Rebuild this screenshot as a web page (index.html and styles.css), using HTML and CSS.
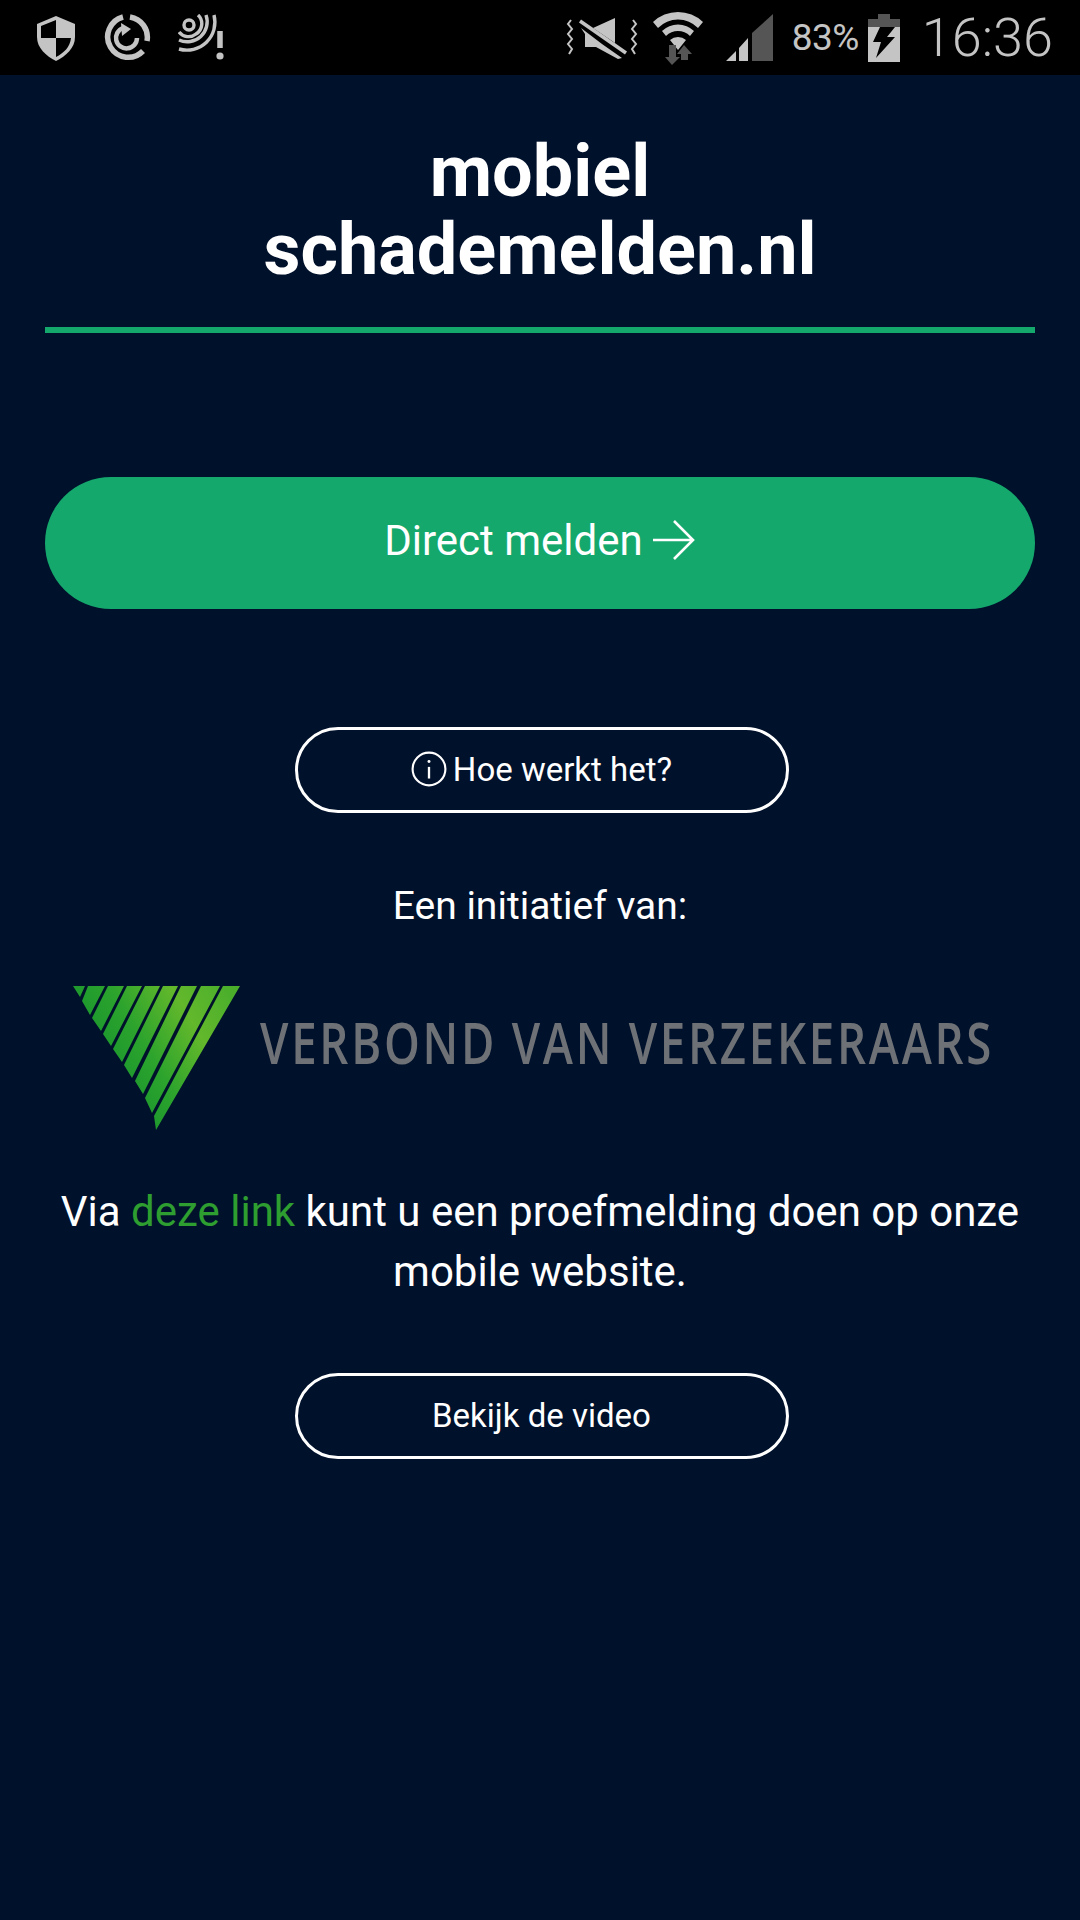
FILE: index.html
```html
<!DOCTYPE html>
<html lang="nl">
<head>
<meta charset="utf-8">
<title>mobiel schademelden.nl</title>
<link rel="stylesheet" href="styles.css">
</head>
<body>
<div class="statusbar">
  <div class="status-left">
    <svg class="ic-shield" width="40" height="46" viewBox="0 0 40 46"><path d="M20 1 L39 9 V22 C39 33 30 41 20 46 C10 41 1 33 1 22 V9Z" fill="#c4c4c4"/><path d="M20 5 V23 H5 V11Z M20 23 H35 C34 32 28 38 20 42Z" fill="#000"/></svg>
    <svg class="ic-sync" width="48" height="48" viewBox="0 0 48 48" fill="none" stroke="#c4c4c4"><path d="M20 3 A20.5 20.5 0 1 0 40 37" stroke-width="5.5"/><path d="M27 3 A20.5 20.5 0 0 1 44 27" stroke-width="5.5"/><path d="M34 24 A10.5 10.5 0 1 1 20 14" stroke-width="4.5"/><path d="M18 9 L28 15 L19 22Z" fill="#c4c4c4" stroke="none"/></svg>
    <svg class="ic-nfc" width="48" height="48" viewBox="0 0 48 48" fill="none" stroke="#c4c4c4" stroke-width="3.4"><circle cx="11" cy="11" r="5"/><path d="M1 18 A12 12 0 0 0 18 20 A12 12 0 0 0 20 1"/><path d="M1 26 A20 20 0 0 0 28 1"/><path d="M1 35 A28 28 0 0 0 36 1"/><path d="M42 17 V34" stroke-width="5.5"/><circle cx="42" cy="42" r="3.6" fill="#c4c4c4" stroke="none"/></svg>
  </div>
  <div class="status-right">
    <svg class="ic-mute" width="72" height="46" viewBox="0 0 72 46" fill="none"><path d="M5 5 L2 9 L6 14 L2 19 L6 24 L2 29 L6 34 L3 39" stroke="#c4c4c4" stroke-width="2"/><path d="M67 5 L70 9 L66 14 L70 19 L66 24 L70 29 L66 34 L69 39" stroke="#c4c4c4" stroke-width="2"/><path d="M15 13 L36 29 L56 43 L52 44 L30 32 H19 V19Z M27 13 L49 3 V28Z" fill="#c4c4c4"/><path d="M14 6 L60 38" stroke="#c4c4c4" stroke-width="3.6"/></svg>
    <svg class="ic-wifi" width="52" height="54" viewBox="0 0 52 54"><path d="M1 11 A36 36 0 0 1 51 11 L46 17 A28 28 0 0 0 6 17Z M10 20 A23 23 0 0 1 42 20 L38 25 A17 17 0 0 0 14 25Z M18 29 A12 12 0 0 1 34 29 L26 39Z" fill="#c4c4c4"/><path d="M17 34 H24 V46 H28 L20 54 L13 46 H17Z" fill="#555"/><path d="M32 34 L40 43 H36 V49 H29 V43 H25Z" fill="#555"/></svg>
    <svg class="ic-signal" width="48" height="50" viewBox="0 0 48 50"><path d="M0 48 L10 38 V48Z M13 35 L22 25 V48 H13Z" fill="#c4c4c4"/><path d="M26 20 L47 1 V48 H26Z" fill="#555"/></svg>
    <span class="pct">83%</span>
    <svg class="ic-batt" width="34" height="48" viewBox="0 0 32 48"><path d="M10 0 H22 V5 H32 V13 H0 V5 H10Z" fill="#555"/><path d="M0 13 H32 V48 H0Z" fill="#c4c4c4"/><path d="M12 13 H27 L19 23 H27 L8 44 L13 28 H5Z" fill="#000"/></svg>
    <span class="clock">16:36</span>
  </div>
</div>
<main class="page">
  <h1 class="title">mobiel<br>schademelden.nl</h1>
  <hr class="rule">
  <a class="btn-primary"><span>Direct melden</span><svg width="44" height="42" viewBox="0 0 44 42" fill="none" stroke="#fff" stroke-width="2.6"><path d="M1 21 H41 M22 2 L41 21 L22 40"/></svg></a>
  <a class="btn-outline btn-first"><svg width="36" height="36" viewBox="0 0 34 34" fill="none" stroke="#fff" stroke-width="2"><circle cx="17" cy="17" r="15.5"/><path d="M17 15 V26" stroke-width="2.2"/><circle cx="17" cy="10" r="1.4" fill="#fff" stroke="none"/></svg><span>Hoe werkt het?</span></a>
  <p class="initiative">Een initiatief van:</p>
  <div class="logo">
    <svg width="168" height="144" viewBox="0 0 168 144">
      <defs><linearGradient id="g" x1="0" y1="0.7" x2="1" y2="0.2"><stop offset="0" stop-color="#0b8a2e"/><stop offset="0.45" stop-color="#2ba32d"/><stop offset="0.75" stop-color="#63b82b"/><stop offset="1" stop-color="#4caf2c"/></linearGradient></defs>
      <path fill="url(#g)" d="M0 0 H12 L7 11Z M15 0 H32 L17 29 L9 15Z M35 0 H51 L28 45 L19 32Z M54 0 H69 L38 60 L30 48Z M72 0 H87 L49 76 L40 63Z M90 0 H105 L59 92 L51 79Z M108 0 H124 L70 108 L62 95Z M128 0 H147 L79 127 L72 112Z M150 0 H167 L83 144 L81 130Z"/>
    </svg>
    <span class="logo-text">VERBOND VAN VERZEKERAARS</span>
  </div>
  <p class="copy">Via <a class="inline-link">deze link</a> kunt u een proefmelding doen op onze mobile website.</p>
  <a class="btn-outline btn-second"><span>Bekijk de video</span></a>
</main>
</body>
</html>
```
FILE: styles.css
```css
* { box-sizing: border-box; }
html, body { margin: 0; padding: 0; }
body { width: 1080px; height: 1920px; background: #00112b; color: #fff; font-family: Roboto, sans-serif; overflow: hidden; }
.statusbar { height: 75px; background: #000; display: flex; justify-content: space-between; align-items: center; padding: 0 27px 0 36px; }
.status-left { display: flex; align-items: center; gap: 27px; }
.status-right { display: flex; align-items: center; }
.ic-mute { margin-right: 14px; }
.ic-wifi { margin-right: 22px; }
.ic-signal { margin-right: 18px; }
.pct { font-size: 37px; color: #c4c4c4; margin-right: 8px; letter-spacing: -0.5px; }
.ic-batt { margin-right: 21px; }
.clock { font-size: 54px; font-weight: 300; color: #c4c4c4; }
.page { padding: 58px 45px 0; display: flex; flex-direction: column; align-items: center; }
.title { margin: 0; font-size: 72px; line-height: 78px; font-weight: 700; text-align: center; }
.rule { width: 100%; height: 6px; margin: 38px 0 0; background: #14a86d; border: 0; }
.btn-primary { margin-top: 144px; width: 100%; height: 132px; border-radius: 66px; background: #14a86d; display: flex; justify-content: center; align-items: center; gap: 9px; font-size: 42px; padding-bottom: 6px; }
.btn-outline { width: 494px; height: 86px; border: 3px solid #fff; border-radius: 43px; display: flex; align-items: center; justify-content: center; gap: 6px; font-size: 33px; padding-bottom: 2px; margin-left: 3px; }
.btn-first { margin-top: 118px; }
.initiative { margin: 68px 0 0; font-size: 39px; line-height: 50px; }
.logo { margin-top: 55px; width: 100%; display: flex; align-items: flex-start; padding-left: 28px; }
.logo svg { flex-shrink: 0; }
.logo-text { margin: 25px 0 0 19px; font-family: "Open Sans", sans-serif; font-weight: 600; font-size: 57px; line-height: 62px; color: #6e7175; letter-spacing: 3.4px; transform: scaleX(0.8); transform-origin: left center; white-space: nowrap; }
.copy { margin: 52px 0 0; font-size: 42px; line-height: 60px; text-align: center; }
.inline-link { color: #2e9e30; }
.btn-second { margin-top: 71px; }
```
